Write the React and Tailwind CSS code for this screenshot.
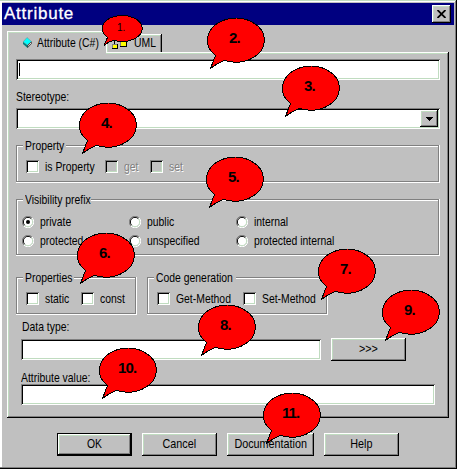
import React from "react";

const sunken =
  "bg-white shadow-[inset_1px_1px_0_#808080,inset_-1px_-1px_0_#fff,inset_2px_2px_0_#000,inset_-2px_-2px_0_#c0dcc0]";
const raised =
  "bg-[#c0c0c0] shadow-[inset_-1px_-1px_0_#000,inset_1px_1px_0_#fff,inset_-2px_-2px_0_#808080,inset_2px_2px_0_#c0dcc0]";

// Condensed label text, similar to the narrow system dialog font.
function Text({ children, className = "" }) {
  return <span className={`inline-block origin-left scale-x-[0.8] ${className}`}>{children}</span>;
}

function Field({ className = "", children }) {
  return <div className={`h-[21px] shrink-0 ${sunken} ${className}`}>{children}</div>;
}

function Group({ title, titleWidth, className = "", children }) {
  return (
    <div
      className={`shrink-0 shadow-[inset_-1px_-1px_0_#fff,inset_1px_1px_0_#808080,inset_-2px_-2px_0_#808080,inset_2px_2px_0_#fff] ${className}`}
    >
      <div className={`-mt-[7px] ml-[7px] h-4 bg-[#c0c0c0] px-[2px] leading-4 ${titleWidth}`}>
        <Text>{title}</Text>
      </div>
      {children}
    </div>
  );
}

function Check({ label, className = "", disabled = false }) {
  return (
    <div className={`flex h-[13px] shrink-0 items-center gap-[6px] ${className}`}>
      <span
        className={`size-[13px] shrink-0 ${
          disabled
            ? "bg-[#c0c0c0] shadow-[inset_1px_1px_0_#808080,inset_-1px_-1px_0_#fff,inset_2px_2px_0_#000,inset_-2px_-2px_0_#c0dcc0]"
            : sunken
        }`}
      />
      <Text className={disabled ? "text-[#808080] [text-shadow:1px_1px_0_#fff]" : ""}>{label}</Text>
    </div>
  );
}

function Radio({ label, checked = false }) {
  return (
    <div className="flex h-[19px] items-center gap-[6px]">
      <svg width="12" height="12" viewBox="0 0 12 12" className="shrink-0">
        <circle cx="6" cy="6" r="5" fill="#fff" />
        <path d="M1.9 10.1A5.5 5.5 0 0 1 10.1 1.9" fill="none" stroke="#808080" />
        <path d="M10.1 1.9A5.5 5.5 0 0 1 1.9 10.1" fill="none" stroke="#fff" />
        <path d="M2.7 9.3A4.5 4.5 0 0 1 9.3 2.7" fill="none" stroke="#000" />
        <path d="M9.3 2.7A4.5 4.5 0 0 1 2.7 9.3" fill="none" stroke="#c0dcc0" />
        {checked && <circle cx="6" cy="6" r="2" fill="#000" />}
      </svg>
      <Text>{label}</Text>
    </div>
  );
}

function Button({ children, className = "" }) {
  return (
    <button className={`flex h-[23px] shrink-0 items-center justify-center pb-px ${raised} ${className}`}>
      <span className="inline-block scale-x-[0.83]">{children}</span>
    </button>
  );
}

function Balloon({ label, place, text = "left-[22px]" }) {
  return (
    <div className={`absolute z-20 h-[52px] w-[58px] ${place}`}>
      <svg width="58" height="52" viewBox="0 0 58 52" shapeRendering="crispEdges">
        <path
          d="M3.5 50.5L8.5 37.5A28.5 22 0 1 1 17.5 42.3Q9 46 3.5 50.5Z"
          fill="#f00"
          stroke="#000"
        />
      </svg>
      <span className={`absolute top-[11.5px] text-[15px] leading-4 font-bold tracking-[-0.9px] font-['Liberation_Sans',sans-serif] ${text}`}>
        {label}
      </span>
    </div>
  );
}

export default function App() {
  return (
    <div className="relative flex h-[469px] w-[457px] flex-col overflow-hidden bg-[#c0c0c0] font-['Liberation_Sans',sans-serif] text-[13px] leading-4 whitespace-nowrap text-black shadow-[inset_-1px_-1px_0_#000,inset_0_1px_0_#c0dcc0,inset_-2px_-2px_0_#808080,inset_2px_2px_0_#fff]">
      <div className="mt-[3px] mr-[3px] ml-[2px] flex h-[22px] shrink-0 items-center justify-between bg-[#000080] pr-[3px] pl-[2px]">
        <span className="text-[17px] leading-5 tracking-[0.75px] text-white [-webkit-text-stroke:0.3px_#fff]">
          Attribute
        </span>
        <span className={`flex h-[18px] w-[19px] items-center justify-center ${raised}`}>
          <svg width="9" height="8" viewBox="0 0 9 8">
            <path d="M.5 0l8 8M8.5 0l-8 8" stroke="#000" strokeWidth="1.8" />
          </svg>
        </span>
      </div>

      <div className="flex h-[27px] shrink-0 items-end pl-[7px]">
        <div className="relative z-10 -mb-[2px] flex h-[23px] w-[99px] shrink-0 items-center gap-[5px] bg-[#c0c0c0] pl-4 shadow-[inset_1px_1px_0_#fff,inset_2px_2px_0_#c0dcc0]">
          <svg width="9" height="11" viewBox="0 0 9 11" className="shrink-0">
            <path d="M0 5L4 .5 8.500 4.500 4.500 8z" fill="#0ff" stroke="#808080" strokeWidth=".5" />
            <path d="M0 5l4.500 3.200V11L0 7z" fill="#008080" />
            <path d="M8.500 4.500v2.300L4.500 11V8.200z" fill="#000" />
            <path d="M5 8.600l3-3.200v1L5 9.800z" fill="#fff" />
          </svg>
          <Text>Attribute (C#)</Text>
        </div>
        <div className="flex h-[18px] w-[56px] shrink-0 items-center gap-[7px] pl-[6px] shadow-[inset_-1px_0_0_#000,inset_1px_1px_0_#fff,inset_-2px_0_0_#808080,inset_2px_2px_0_#c0dcc0]">
          <svg width="15" height="13" viewBox="0 0 15 13" shapeRendering="crispEdges" className="shrink-0">
            <path d="M2.500 8V1.500h8V5M6 1.500h4" fill="none" stroke="#000" />
            <path d="M.5 7.500h5v4h-5zM8.500 4.500h6v5h-6z" fill="#ff0" stroke="#808080" />
            <path d="M0 11.500h5.500V7M8 9.500h6.500V4" fill="none" stroke="#000" />
          </svg>
          <Text>UML</Text>
        </div>
      </div>

      <div className="ml-[7px] flex h-[366px] w-[442px] shrink-0 flex-col pt-[7px] pl-[9px] shadow-[inset_-1px_-1px_0_#000,inset_1px_1px_0_#fff,inset_-2px_-2px_0_#808080,inset_2px_2px_0_#c0dcc0]">
        <Field className="w-[424px] pt-1 pl-[3px]">
          <div className="h-[13px] w-px bg-black" />
        </Field>
        <div className="h-[28px] shrink-0 pt-[9px]">
          <Text>Stereotype:</Text>
        </div>
        <Field className="flex w-[424px] justify-end p-[2px]">
          <span className={`flex h-[17px] w-[18px] items-center justify-center ${raised}`}>
            <svg width="7" height="4" viewBox="0 0 7 4" shapeRendering="crispEdges">
              <path d="M0 0h7L3.500 4z" />
            </svg>
          </span>
        </Field>

        <Group title="Property" titleWidth="w-[43px]" className="mt-4 h-[38px] w-[424px]">
          <div className="mt-[6px] flex pl-[10px]">
            <Check label="is Property" className="w-[79px]" />
            <Check label="get" disabled className="w-[45px]" />
            <Check label="set" disabled />
          </div>
        </Group>

        <Group title="Visibility prefix" titleWidth="w-[68px]" className="mt-4 h-[57px] w-[424px]">
          <div className="mt-[4px] grid grid-cols-[107px_107px_150px] pl-[6px]">
            <Radio label="private" checked />
            <Radio label="public" />
            <Radio label="internal" />
            <Radio label="protected" />
            <Radio label="unspecified" />
            <Radio label="protected internal" />
          </div>
        </Group>

        <div className="mt-[21px] flex shrink-0 gap-[10px]">
          <Group title="Properties" titleWidth="w-[51px]" className="h-[38px] w-[121px]">
            <div className="mt-[6px] flex pl-[10px]">
              <Check label="static" className="w-[55px]" />
              <Check label="const" />
            </div>
          </Group>
          <Group title="Code generation" titleWidth="w-[82px]" className="h-[38px] w-[181px]">
            <div className="mt-[6px] flex pl-[10px]">
              <Check label="Get-Method" className="w-[86px]" />
              <Check label="Set-Method" />
            </div>
          </Group>
        </div>

        <div className="h-[23px] shrink-0 pt-[4px] pl-[6px]">
          <Text>Data type:</Text>
        </div>
        <div className="flex shrink-0 items-center gap-[10px] pl-[5px]">
          <Field className="w-[300px]" />
          <Button className="w-[75px]">&gt;&gt;&gt;</Button>
        </div>
        <div className="h-[23px] shrink-0 pt-[9px] pl-[5px]">
          <Text>Attribute value:</Text>
        </div>
        <Field className="ml-[5px] w-[414px]" />
      </div>

      <div className="mt-[15px] flex shrink-0 gap-[10px] pl-[57px]">
        <div className="flex bg-black p-px">
          <button className={`flex h-[21px] w-[73px] items-center justify-center pb-px ${raised}`}>
            <span className="inline-block scale-x-[0.8]">OK</span>
          </button>
        </div>
        <Button className="w-[75px]">Cancel</Button>
        <Button className="w-[87px]">Documentation</Button>
        <Button className="w-[75px]">Help</Button>
      </div>

      <div className="absolute top-[15px] left-[101px] z-20 h-[32px] w-[42px]">
        <svg width="42" height="32" viewBox="0 0 42 32" shapeRendering="crispEdges">
          <path d="M3 30.500L6.500 22.300A20 13 0 1 1 12.500 25.200Q7 27 3 30.500Z" fill="#f00" stroke="#000" />
        </svg>
        <span className="absolute top-[6px] left-[16px] text-[10px] leading-[13px]">1.</span>
      </div>
      <Balloon label="2." place="left-[207px] top-[18px]" />
      <Balloon label="3." place="left-[282px] top-[66px]" />
      <Balloon label="4." place="left-[79px] top-[103px]" />
      <Balloon label="5." place="left-[206px] top-[157px]" />
      <Balloon label="6." place="left-[77px] top-[233px]" />
      <Balloon label="7." place="left-[318px] top-[249px]" />
      <Balloon label="8." place="left-[198px] top-[305px]" />
      <Balloon label="9." place="left-[382px] top-[290px]" />
      <Balloon label="10." place="left-[99px] top-[348px]" text="left-[19px]" />
      <Balloon label="11." place="left-[263px] top-[393px]" text="left-[19px]" />
    </div>
  );
}
